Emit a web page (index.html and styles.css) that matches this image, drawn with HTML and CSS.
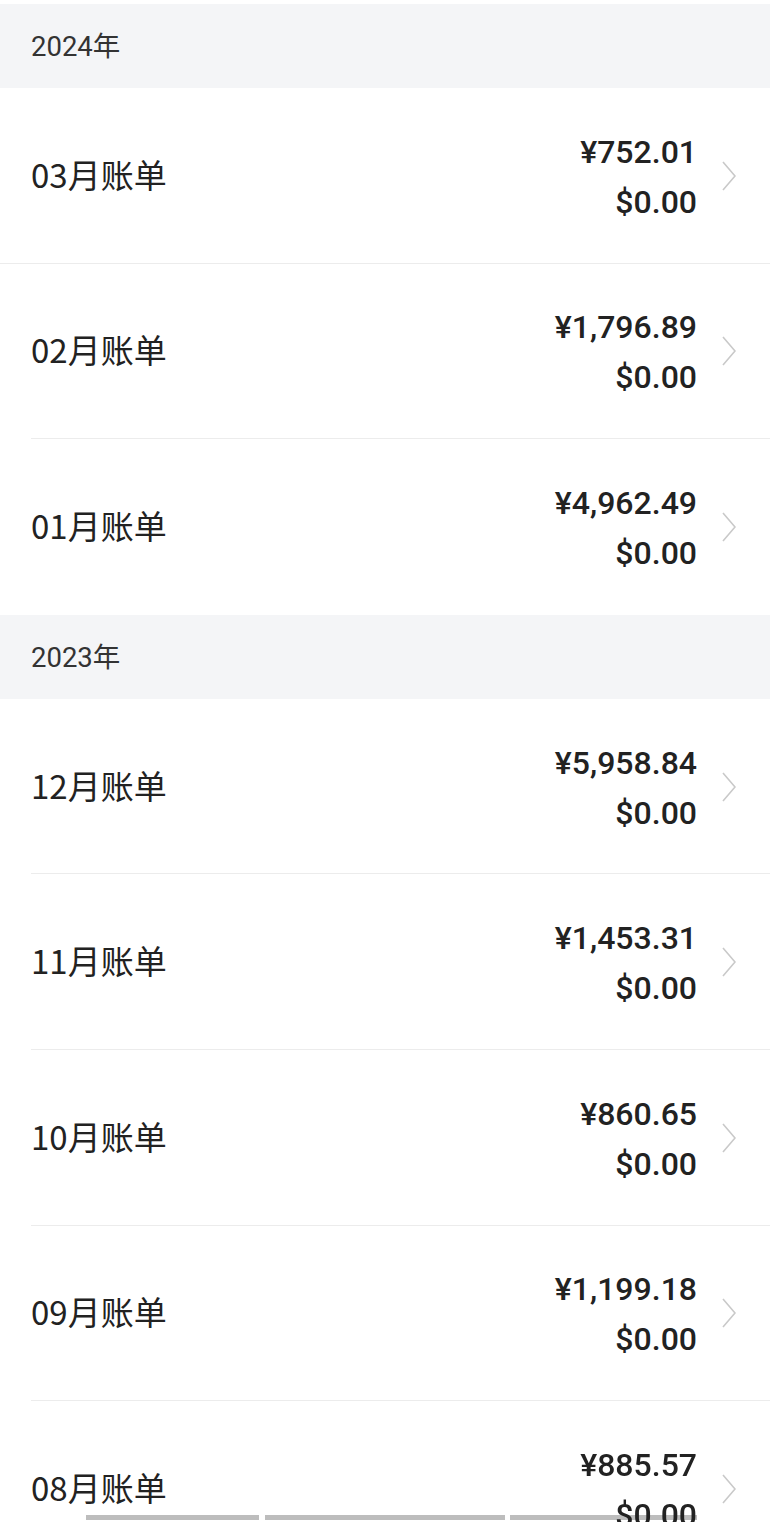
FILE: index.html
```html
<!DOCTYPE html>
<html lang="zh-CN">
<head>
  <meta charset="UTF-8">
  <meta name="viewport" content="width=device-width, initial-scale=1.0">
  <title>账单</title>
  <link rel="stylesheet" href="styles.css">
</head>

<body>
  <div class="bill-list">
    <div class="year-header">2024年</div>

    <div class="bill-row bill-row-full">
      <span class="bill-month">03月账单</span>
      <div class="bill-amounts">
        <span>¥752.01</span>
        <span>$0.00</span>
      </div>
      <svg class="chevron" viewBox="0 0 14 30"><path d="M1 1 L13 15 L1 29" /></svg>
    </div>

    <div class="bill-row">
      <span class="bill-month">02月账单</span>
      <div class="bill-amounts">
        <span>¥1,796.89</span>
        <span>$0.00</span>
      </div>
      <svg class="chevron" viewBox="0 0 14 30"><path d="M1 1 L13 15 L1 29" /></svg>
    </div>

    <div class="bill-row bill-row-last">
      <span class="bill-month">01月账单</span>
      <div class="bill-amounts">
        <span>¥4,962.49</span>
        <span>$0.00</span>
      </div>
      <svg class="chevron" viewBox="0 0 14 30"><path d="M1 1 L13 15 L1 29" /></svg>
    </div>

    <div class="year-header">2023年</div>

    <div class="bill-row">
      <span class="bill-month">12月账单</span>
      <div class="bill-amounts">
        <span>¥5,958.84</span>
        <span>$0.00</span>
      </div>
      <svg class="chevron" viewBox="0 0 14 30"><path d="M1 1 L13 15 L1 29" /></svg>
    </div>

    <div class="bill-row">
      <span class="bill-month">11月账单</span>
      <div class="bill-amounts">
        <span>¥1,453.31</span>
        <span>$0.00</span>
      </div>
      <svg class="chevron" viewBox="0 0 14 30"><path d="M1 1 L13 15 L1 29" /></svg>
    </div>

    <div class="bill-row">
      <span class="bill-month">10月账单</span>
      <div class="bill-amounts">
        <span>¥860.65</span>
        <span>$0.00</span>
      </div>
      <svg class="chevron" viewBox="0 0 14 30"><path d="M1 1 L13 15 L1 29" /></svg>
    </div>

    <div class="bill-row">
      <span class="bill-month">09月账单</span>
      <div class="bill-amounts">
        <span>¥1,199.18</span>
        <span>$0.00</span>
      </div>
      <svg class="chevron" viewBox="0 0 14 30"><path d="M1 1 L13 15 L1 29" /></svg>
    </div>

    <div class="bill-row">
      <span class="bill-month">08月账单</span>
      <div class="bill-amounts">
        <span>¥885.57</span>
        <span>$0.00</span>
      </div>
      <svg class="chevron" viewBox="0 0 14 30"><path d="M1 1 L13 15 L1 29" /></svg>
    </div>
  </div>

  <!-- полоски прокрутки внизу скриншота -->
  <div class="scroll-bars">
    <span class="bar-a"></span>
    <span class="bar-b"></span>
    <span class="bar-c"></span>
  </div>
</body>
</html>
```

FILE: styles.css
```css
:root {
  --bg: #ffffff;
  --header-bg: #f4f5f7;
  --text: #222222;
  --text-header: #333333;
  --border: #ececec;
  --chevron: #c9c9c9;
  --bar: #bdbdbd;
}

* {
  margin: 0;
  padding: 0;
  box-sizing: border-box;
}

body {
  font-family: Roboto, "Noto Sans CJK SC", sans-serif;
  background: var(--bg);
  color: var(--text);
  overflow: hidden;
}

.bill-list {
  padding-top: 4px;
}

.year-header {
  height: 84px;
  display: flex;
  align-items: center;
  padding-left: 31px;
  padding-bottom: 4px;
  background: var(--header-bg);
  color: var(--text-header);
  font-size: 27.5px;
}

.bill-row {
  position: relative;
  height: 175.6px;
  display: flex;
  align-items: center;
  padding: 0 34px 0 31px;
}

.bill-row::after {
  content: "";
  position: absolute;
  left: 31px;
  right: 0;
  bottom: 0;
  height: 1px;
  background: var(--border);
}

.bill-row-full::after {
  left: 0;
}

.bill-row-last::after {
  display: none;
}

.bill-month {
  flex: 1;
  font-size: 33px;
  font-family: "Noto Sans CJK SC", sans-serif;
  color: var(--text);
  margin-bottom: 4px;
}

.bill-amounts {
  display: flex;
  flex-direction: column;
  align-items: flex-end;
  font-size: 32px;
  font-weight: 500;
  line-height: 50px;
  margin-top: 2px;
  position: relative;
  z-index: 2;
}

.chevron {
  width: 14px;
  height: 30px;
  margin-left: 25px;
  fill: none;
  stroke: var(--chevron);
  stroke-width: 1.6;
}

.scroll-bars {
  position: fixed;
  left: 0;
  right: 0;
  bottom: 2px;
  height: 5px;
  z-index: 1;
}

.scroll-bars span {
  position: absolute;
  top: 0;
  height: 5px;
  background: var(--bar);
}

.bar-a { left: 86px; width: 173px; }
.bar-b { left: 265px; width: 240px; }
.bar-c { left: 510px; width: 187px; }
```
